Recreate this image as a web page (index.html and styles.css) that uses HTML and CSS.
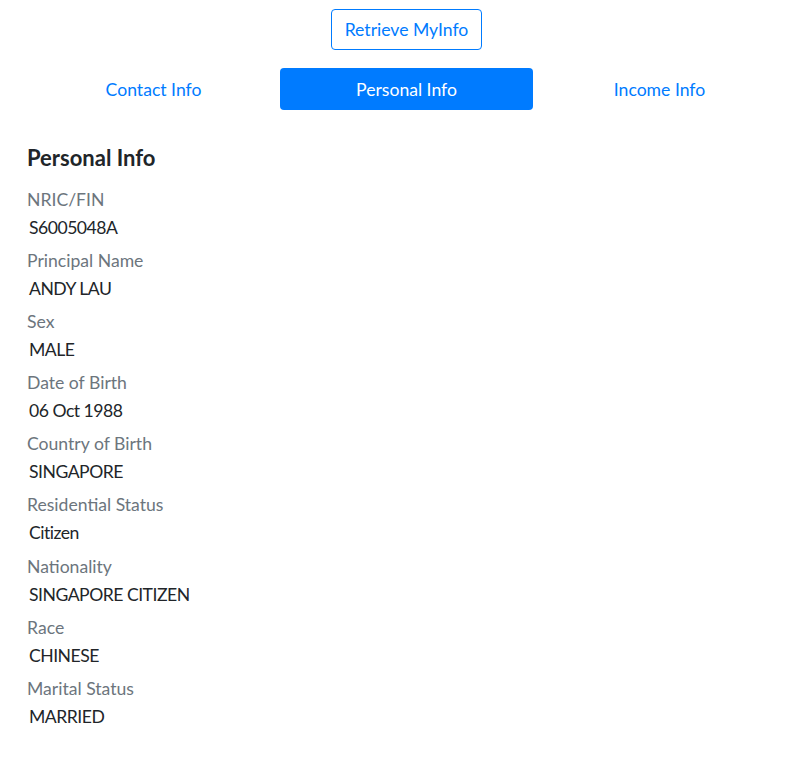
FILE: index.html
```html
<!DOCTYPE html>
<html lang="en">
<head>
<meta charset="utf-8">
<title>MyInfo</title>
<link rel="stylesheet" href="styles.css">
</head>
<body>
<div class="page">
  <div class="actions">
    <button class="btn-outline" type="button">Retrieve MyInfo</button>
  </div>
  <nav class="tabs">
    <a class="tab" href="#">Contact Info</a>
    <a class="tab active" href="#">Personal Info</a>
    <a class="tab" href="#">Income Info</a>
  </nav>
  <section class="panel">
    <h5 class="panel-title">Personal Info</h5>
    <div class="field"><div class="label">NRIC/FIN</div><div class="value">S6005048A</div></div>
    <div class="field"><div class="label">Principal Name</div><div class="value">ANDY LAU</div></div>
    <div class="field"><div class="label">Sex</div><div class="value">MALE</div></div>
    <div class="field"><div class="label">Date of Birth</div><div class="value">06 Oct 1988</div></div>
    <div class="field"><div class="label">Country of Birth</div><div class="value">SINGAPORE</div></div>
    <div class="field"><div class="label">Residential Status</div><div class="value">Citizen</div></div>
    <div class="field"><div class="label">Nationality</div><div class="value">SINGAPORE CITIZEN</div></div>
    <div class="field"><div class="label">Race</div><div class="value">CHINESE</div></div>
    <div class="field"><div class="label">Marital Status</div><div class="value">MARRIED</div></div>
  </section>
</div>
</body>
</html>
```

FILE: styles.css
```css
* { box-sizing: border-box; }
html, body { margin: 0; padding: 0; background: #fff; }
body {
  font-family: "Segoe UI", Lato, "Noto Sans", Arial, sans-serif;
  font-size: 17.6px;
  line-height: 1.5;
  color: #212529;
}
.page {
  padding: 9px 21px 0 27px;
}
.actions {
  display: flex;
  justify-content: center;
}
.btn-outline {
  font-family: inherit;
  font-size: 17.6px;
  line-height: 27px;
  color: #007bff;
  background: #fff;
  border: 1px solid #007bff;
  border-radius: 4px;
  padding: 6px 13px;
  cursor: pointer;
}
.tabs {
  display: grid;
  grid-template-columns: repeat(3, 1fr);
  margin-top: 18px;
}
.tab {
  display: block;
  text-align: center;
  color: #007bff;
  text-decoration: none;
  line-height: 26px;
  padding: 9px 16px 7px;
  border-radius: 4px;
}
.tab.active {
  background: #007bff;
  color: #fff;
}
.panel {
  padding-top: 35px;
}
.panel-title {
  margin: 0 0 16px 0;
  font-size: 22px;
  font-weight: 700;
  line-height: 26px;
  color: #212529;
}
.field {
  margin-bottom: 7.1px;
}
.label {
  color: #6c757d;
  line-height: 26px;
  padding-bottom: 2px;
}
.value {
  line-height: 26px;
  padding-left: 2px;
  letter-spacing: -0.5px;
}
```
